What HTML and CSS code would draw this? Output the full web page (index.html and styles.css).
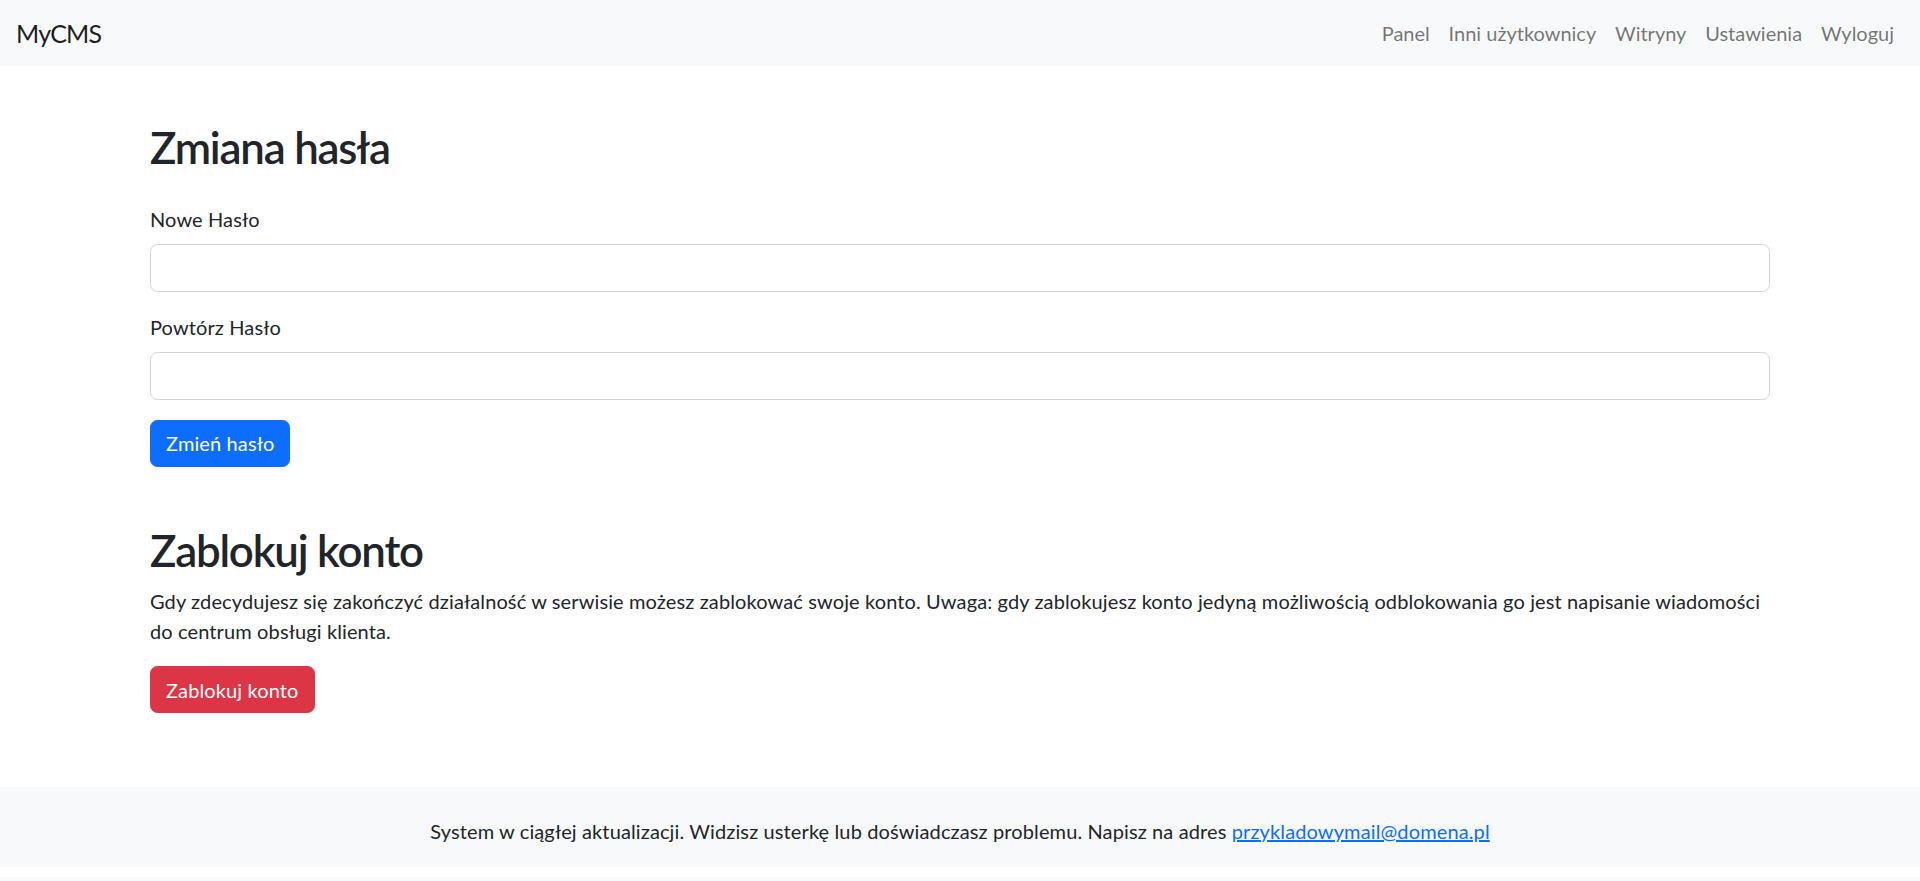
FILE: index.html
```html
<!DOCTYPE html>
<html lang="pl">
<head>
<meta charset="utf-8">
<title>MyCMS - Ustawienia</title>
<link rel="stylesheet" href="styles.css">
</head>
<body>
<nav class="navbar">
  <a class="brand" href="#">MyCMS</a>
  <ul class="nav">
    <li><a href="#">Panel</a></li>
    <li><a href="#">Inni użytkownicy</a></li>
    <li><a href="#">Witryny</a></li>
    <li><a href="#">Ustawienia</a></li>
    <li><a href="#">Wyloguj</a></li>
  </ul>
</nav>
<main class="container">
  <section class="section">
    <h2 class="title title-form">Zmiana hasła</h2>
    <form class="form">
      <div class="field">
        <label class="label" for="p1">Nowe Hasło</label>
        <input class="input" id="p1" type="password">
      </div>
      <div class="field">
        <label class="label" for="p2">Powtórz Hasło</label>
        <input class="input" id="p2" type="password">
      </div>
      <button type="button" class="btn btn-primary">Zmień hasło</button>
    </form>
  </section>
  <section class="section section-block">
    <h2 class="title">Zablokuj konto</h2>
    <p class="text">Gdy zdecydujesz się zakończyć działalność w serwisie możesz zablokować swoje konto. Uwaga: gdy zablokujesz konto jedyną możliwością odblokowania go jest napisanie wiadomości do centrum obsługi klienta.</p>
    <button type="button" class="btn btn-danger">Zablokuj konto</button>
  </section>
</main>
<footer class="footer">
  <p class="footer-text">System w ciągłej aktualizacji. Widzisz usterkę lub doświadczasz problemu. Napisz na adres <a href="#">przykladowymail@domena.pl</a></p>
</footer>
<div class="bottom-strip"></div>
</body>
</html>
```

FILE: styles.css
```css
* { box-sizing: border-box; }

html, body {
  margin: 0;
  padding: 0;
}

body {
  font-family: Lato, "Noto Sans", "Liberation Sans", sans-serif;
  font-size: 20px;
  line-height: 30px;
  letter-spacing: 0.12px;
  color: #212529;
  background: #fff;
}

.navbar {
  height: 66px;
  background: #f8f9fa;
  display: flex;
  align-items: center;
  justify-content: space-between;
  padding: 0 16px;
  letter-spacing: 0;
}

.brand {
  font-size: 25px;
  line-height: 37px;
  letter-spacing: -0.8px;
  color: rgba(0, 0, 0, 0.9);
  text-decoration: none;
}

.nav {
  display: flex;
  list-style: none;
  margin: 0;
  padding: 0;
}

.nav a {
  display: block;
  padding: 0 9.4px;
  color: rgba(0, 0, 0, 0.55);
  text-decoration: none;
  font-size: 20px;
  line-height: 30px;
}

.nav li:last-child a {
  padding-right: 10px;
}

.container {
  width: 1620px;
  margin: 0 auto;
  padding-top: 55px;
}

.title {
  margin: 0 0 10px;
  font-size: 43.8px;
  line-height: 52.5px;
  font-weight: 600;
  letter-spacing: -1.2px;
}

.title-form {
  margin-bottom: 30px;
}

.field {
  margin-bottom: 20px;
}

.label {
  display: block;
  margin-bottom: 10px;
}

.input {
  display: block;
  width: 100%;
  height: 48px;
  padding: 8px 15px;
  font: inherit;
  border: 1px solid #ced4da;
  border-radius: 7.5px;
  background: #fff;
}

.btn {
  display: inline-block;
  font: inherit;
  letter-spacing: inherit;
  line-height: 30px;
  padding: 7.5px 15px;
  border: 1px solid transparent;
  border-radius: 7.5px;
  color: #fff;
  cursor: pointer;
}

.btn-primary {
  background: #0d6efd;
  border-color: #0d6efd;
}

.btn-danger {
  background: #dc3545;
  border-color: #dc3545;
}

.section-block {
  margin-top: 57px;
}

.text {
  margin: 0 0 20px;
}

.footer {
  margin-top: 74px;
  height: 80px;
  background: #f8f9fa;
  padding-top: 29px;
  text-align: center;
}

.footer-text {
  margin: 0;
}

.footer-text a {
  color: #0d6efd;
}

.bottom-strip {
  margin-top: 10px;
  height: 4px;
  background: #f8f9fa;
}
```
